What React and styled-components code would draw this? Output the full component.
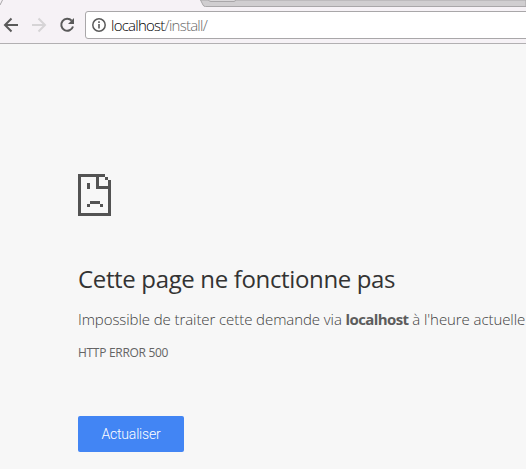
import styled, { createGlobalStyle } from "styled-components";

const GlobalStyle = createGlobalStyle`
    * {
        box-sizing: border-box;
    }

    body {
        margin: 0;
        overflow: hidden;
        background-color: #f7f7f7;
    }
`;

const Window = styled.div`
    display: flex;
    flex-direction: column;
    width: 526px;
    height: 469px;
    overflow: hidden;
    background-color: #f7f7f7;
    font-family: "Open Sans", "Noto Sans", sans-serif;
`;

const TabStrip = styled.svg`
    display: block;
    flex: none;
    width: 526px;
    height: 7px;
    background-color: #f6f2f6;
`;

const Toolbar = styled.div`
    display: flex;
    flex: none;
    align-items: flex-start;
    height: 37px;
    padding-top: 4px;
    background-color: #f6f2f6;
    border-bottom: 1px solid #b2b0b2;
`;

const NavButtons = styled.div`
    display: flex;
    flex: none;
    width: 85px;
    padding: 6px 0 0 3px;
    gap: 12px;
`;

const NavIcon = styled.svg`
    flex: none;
    width: 16px;
    height: 16px;
    fill: none;
    stroke: ${({ $disabled }) => ($disabled ? "#d6d4d6" : "#5a5a5a")};
    stroke-width: 2;
`;

const AddressBar = styled.div`
    display: flex;
    flex: none;
    align-items: center;
    width: 460px;
    height: 28px;
    padding-left: 6px;
    background-color: #ffffff;
    border: 1px solid #a9a7a9;
    border-radius: 3px;
`;

const InfoIcon = styled.svg`
    width: 14px;
    height: 14px;
`;

const Url = styled.span`
    margin-left: 5px;
    color: #686868;
    font-size: 15px;
    font-weight: 300;
    line-height: 20px;
    letter-spacing: -0.75px;
    white-space: nowrap;
`;

const Host = styled.span`
    color: #000000;
`;

const ErrorPage = styled.main`
    display: flex;
    flex-direction: column;
    align-items: flex-start;
    padding: 130px 0 0 78px;
    white-space: nowrap;
`;

const SadPage = styled.svg`
    width: 33px;
    height: 42px;
    fill: #535353;
`;

const Title = styled.h1`
    margin: 46px 0 0;
    color: #333333;
    font-size: 24px;
    font-weight: 400;
    line-height: 34px;
    letter-spacing: -0.35px;
`;

const Message = styled.p`
    margin: 13px 0 0;
    color: #404040;
    font-size: 15px;
    font-weight: 300;
    line-height: 20px;
    letter-spacing: -0.08px;

    strong {
        color: #5c5c5c;
        font-weight: 700;
        letter-spacing: -0.6px;
    }
`;

const ErrorCode = styled.p`
    margin: 15px 0 0;
    color: #646464;
    font-size: 12px;
    line-height: 18px;
    letter-spacing: -0.3px;
`;

const ReloadButton = styled.button`
    width: 106px;
    height: 36px;
    margin-top: 54px;
    padding: 0;
    color: #ffffff;
    background-color: #4285f4;
    border: none;
    border-radius: 2px;
    font-family: Roboto, sans-serif;
    font-size: 14px;
    font-weight: 300;
    letter-spacing: -0.2px;
`;

export default function App() {
    return (
        <Window>
            <GlobalStyle />
            <TabStrip viewBox="0 0 526 7">
                <path d="M200.5 0L203 5Q203.6 6.5 205.5 6.5H526V0Z" fill="#d0ced0" stroke="#a9a7a9" />
                <path d="M207.5 -2L208.5 0Q209 1.5 211 1.5H234Q236 1.5 235.5 -1" fill="#d9d7d9" stroke="#a9a7a9" />
                <path d="M0 5L2.5 0" stroke="#a9a7a9" />
            </TabStrip>
            <Toolbar>
                <NavButtons>
                    <NavIcon viewBox="0 0 16 16">
                        <path d="M15 8H2.5M8.5 1.5L2 8L8.5 14.5" />
                    </NavIcon>
                    <NavIcon viewBox="0 0 16 16" $disabled>
                        <path d="M1 8H13.5M7.5 1.5L14 8L7.5 14.5" />
                    </NavIcon>
                    <NavIcon viewBox="0 0 16 16">
                        <path d="M12.7 3.7A6 6 0 1 0 14 9.5" />
                        <path d="M15 1V7H9Z" fill="#5a5a5a" stroke="none" />
                    </NavIcon>
                </NavButtons>
                <AddressBar>
                    <InfoIcon viewBox="0 0 14 14">
                        <circle cx="7" cy="7" r="6.2" fill="none" stroke="#5a5a5a" strokeWidth="1.5" />
                        <path d="M6.2 3.3H7.8V4.9H6.2ZM6.2 6.1H7.8V10.6H6.2Z" fill="#5a5a5a" />
                    </InfoIcon>
                    <Url>
                        <Host>localhost</Host>/install/
                    </Url>
                </AddressBar>
            </Toolbar>
            <ErrorPage>
                <SadPage viewBox="0 0 33 42" shapeRendering="crispEdges">
                    <path d="M0 0H27V3H21V12H30V6H33V42H0ZM3 3V39H30V15H18V3Z" fillRule="evenodd" />
                    <path d="M27 3H30V6H27ZM9 9H12V15H9ZM12 27H22V30H12ZM9 30H12V33H9ZM22 30H25V33H22Z" />
                </SadPage>
                <Title>Cette page ne fonctionne pas</Title>
                <Message>
                    Impossible de traiter cette demande via <strong>localhost</strong> à l'heure actuelle
                </Message>
                <ErrorCode>HTTP ERROR 500</ErrorCode>
                <ReloadButton>Actualiser</ReloadButton>
            </ErrorPage>
        </Window>
    );
}
